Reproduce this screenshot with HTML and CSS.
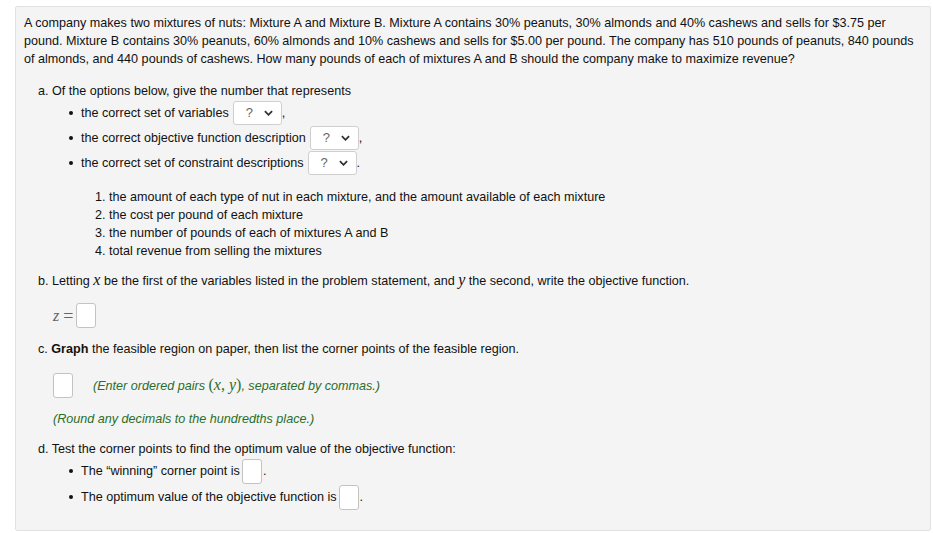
FILE: index.html
```html
<!DOCTYPE html>
<html>
<head>
<meta charset="utf-8">
<link rel="stylesheet" href="styles.css">
</head>
<body>
<div class="card">
  <p class="intro">A company makes two mixtures of nuts: Mixture A and Mixture B. Mixture A contains 30% peanuts, 30% almonds and 40% cashews and sells for $3.75 per pound. Mixture B contains 30% peanuts, 60% almonds and 10% cashews and sells for $5.00 per pound. The company has 510 pounds of peanuts, 840 pounds of almonds, and 440 pounds of cashews. How many pounds of each of mixtures A and B should the company make to maximize revenue?</p>

  <div class="part">
    <p class="line">a. Of the options below, give the number that represents</p>
    <ul class="bullets">
      <li>the correct set of variables <span class="sel">?<svg class="chev" viewBox="0 0 10 6"><path d="M1 1l4 4 4-4" /></svg></span>,</li>
      <li>the correct objective function description <span class="sel">?<svg class="chev" viewBox="0 0 10 6"><path d="M1 1l4 4 4-4" /></svg></span>,</li>
      <li>the correct set of constraint descriptions <span class="sel">?<svg class="chev" viewBox="0 0 10 6"><path d="M1 1l4 4 4-4" /></svg></span>.</li>
    </ul>
    <ol class="options">
      <li>the amount of each type of nut in each mixture, and the amount available of each mixture</li>
      <li>the cost per pound of each mixture</li>
      <li>the number of pounds of each of mixtures A and B</li>
      <li>total revenue from selling the mixtures</li>
    </ol>

    <p class="line lb">b. Letting <span class="m">x</span> be the first of the variables listed in the problem statement, and <span class="m">y</span> the second, write the objective function.</p>
    <div class="zrow"><span class="m zeq">z</span><span class="eq">=</span><span class="box"></span></div>

    <p class="line lc">c. <b>Graph</b> the feasible region on paper, then list the corner points of the feasible region.</p>
    <div class="crow"><span class="box"></span><span class="hint">(Enter ordered pairs <span class="mh">(<span class="m">x</span>, <span class="m">y</span>)</span>, separated by commas.)</span></div>
    <p class="hint round">(Round any decimals to the hundredths place.)</p>

    <p class="line ld">d. Test the corner points to find the optimum value of the objective function:</p>
    <ul class="bullets dl">
      <li>The “winning” corner point is <span class="box"></span>.</li>
      <li>The optimum value of the objective function is <span class="box"></span>.</li>
    </ul>
  </div>
</div>
</body>
</html>
```
FILE: styles.css
```css
html, body {
  margin: 0;
  padding: 0;
  background: #fff;
}
body {
  font-family: "Liberation Sans", Arial, sans-serif;
  font-size: 12.6px;
  line-height: 18px;
  color: #111;
}
.card {
  margin: 6px 2px 0 15px;
  height: 525px;
  box-sizing: border-box;
  background: #f4f4f4;
  border: 1px solid #e2e2e2;
  border-radius: 2px;
  padding: 7px 8px 0 8px;
}
p { margin: 0; }
.part { padding-left: 14px; margin-top: 14px; }
.bullets {
  margin: 0;
  padding-left: 43px;
  list-style: none;
}
.bullets li { height: 25px; display: flex; align-items: center; }
.bullets li::before {
  content: "";
  width: 4px; height: 4px; border-radius: 50%;
  background: #111;
  margin-left: -12px; margin-right: 8px;
}
.sel {
  display: inline-flex;
  align-items: center;
  justify-content: space-between;
  box-sizing: border-box;
  height: 24px;
  width: 49px;
  padding: 0 8px 0 12px;
  margin-left: 4px;
  background: #fff;
  border: 1px solid #cfcfcf;
  border-radius: 3px;
  color: #666;
  font-size: 13px;
}
.chev { width: 9px; height: 6px; }
.chev path { fill: none; stroke: #333; stroke-width: 2; }
.options {
  margin: 13px 0 0 0;
  padding-left: 71px;
}
.options li { line-height: 18px; }
.lb { margin-top: 12px; }
.m {
  font-family: "Liberation Serif", serif;
  font-style: italic;
  font-size: 16px;
  line-height: 1;
}
.zrow {
  display: flex;
  align-items: center;
  margin: 13px 0 0 15px;
  height: 25px;
}
.zeq { color: #666; }
.eq { color: #666; font-size: 18px; margin: 0 3px 0 4px; font-family: "Liberation Serif", serif; line-height: 1; }
.box {
  display: inline-block;
  box-sizing: border-box;
  width: 20px;
  height: 25px;
  background: #fff;
  border: 1px solid #c3c3c3;
  border-radius: 3px;
  vertical-align: middle;
}
.lc { margin-top: 12px; }
.lc b { font-weight: bold; }
.crow {
  display: flex;
  align-items: center;
  margin: 15px 0 0 15px;
  height: 25px;
}
.hint {
  color: #2a6e2a;
  font-style: italic;
}
.crow .hint { margin-left: 20px; }
.mh { font-style: normal; font-size: 16px; font-family: "Liberation Serif", serif; line-height: 1; }
.round { margin: 12px 0 0 15px; }
.ld { margin-top: 12px; }
.dl li { height: 26px; }
.dl .box { margin: 0 1px 0 2px; }
```
